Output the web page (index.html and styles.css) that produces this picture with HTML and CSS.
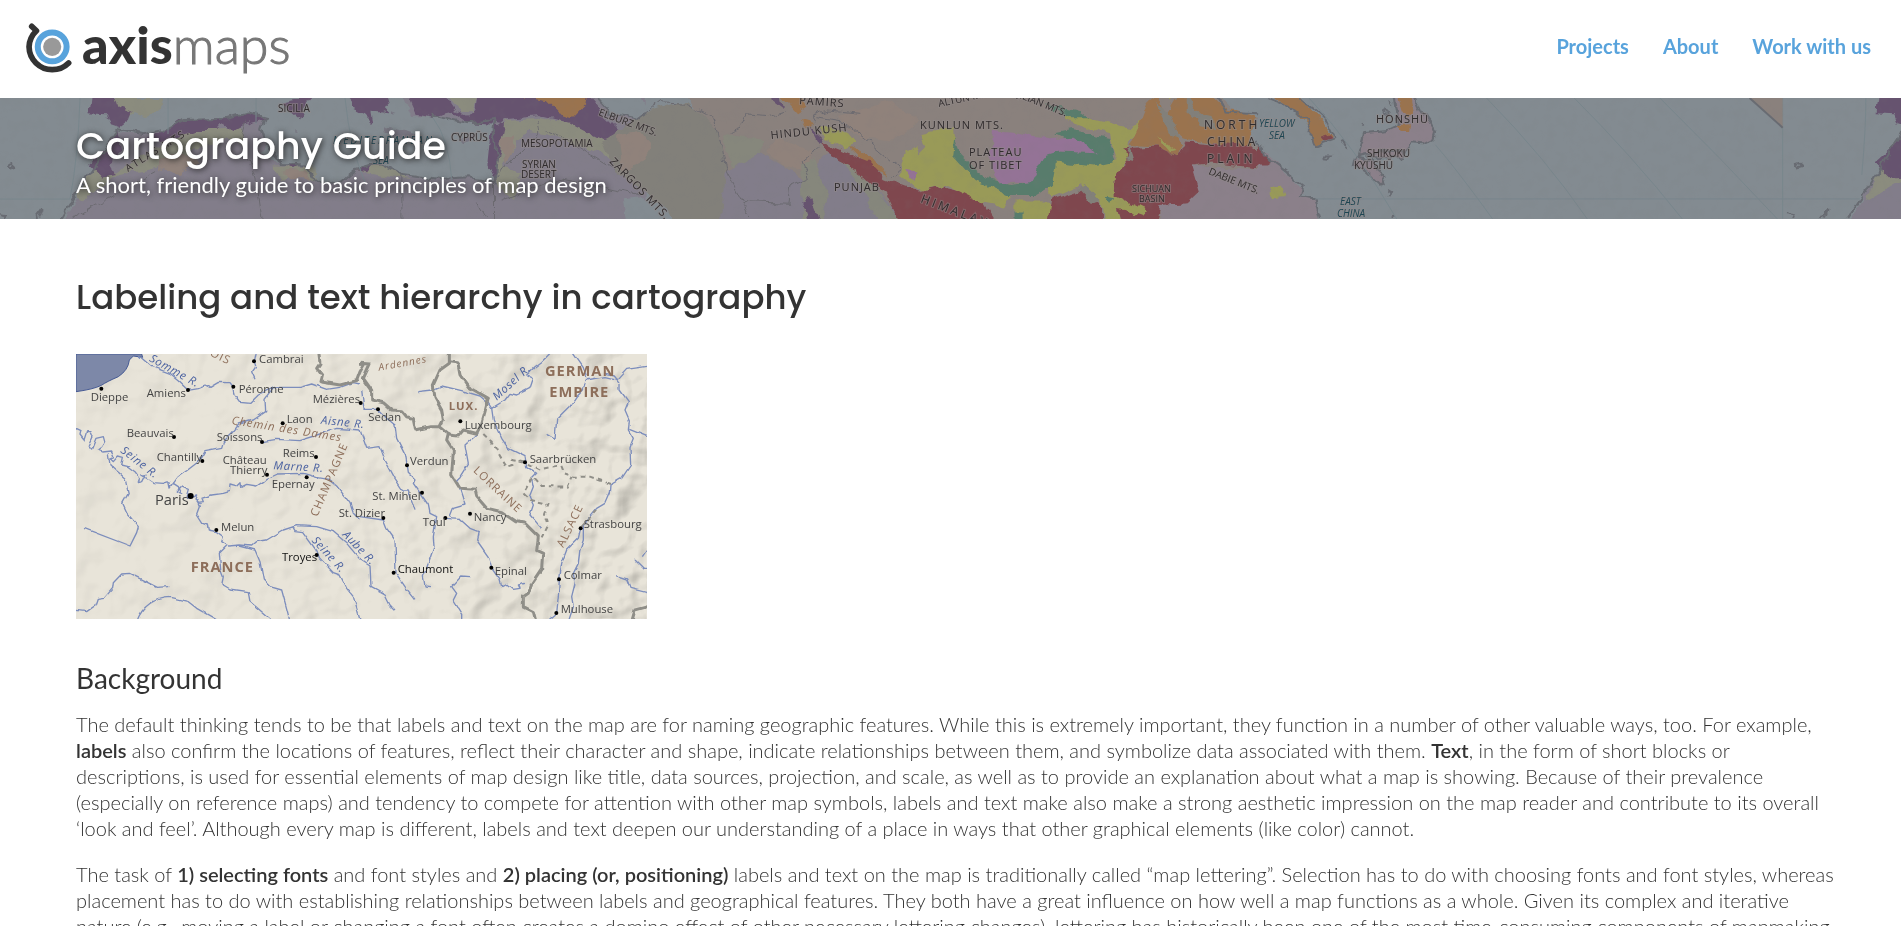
FILE: index.html
```html
<!DOCTYPE html>
<html lang="en">
<head>
<meta charset="utf-8">
<meta name="viewport" content="width=device-width, initial-scale=1">
<title>Labeling and text hierarchy in cartography</title>
<link rel="stylesheet" href="styles.css">
</head>
<body>
<header class="site-header">
  <a class="brand" href="#" aria-label="axismaps">
    <svg class="brand-mark" viewBox="75 65 140 155" aria-hidden="true">
      <path d="M95 78L109 91Q88 111 87 139A69 69 0 0 0 156 207Q185 207 205 187" fill="none" stroke="#333" stroke-width="17" stroke-linecap="round" stroke-linejoin="round"/>
      <circle cx="156" cy="139" r="43" fill="#fff" stroke="#58a3dc" stroke-width="18"/>
      <circle cx="156" cy="139" r="27" fill="#999"/>
    </svg>
    <span class="brand-name"><b>axis</b><span class="brand-thin">maps</span></span>
  </a>
  <nav class="site-nav">
    <a href="#">Projects</a>
    <a href="#">About</a>
    <a href="#">Work with us</a>
  </nav>
</header>

<section class="banner">
  <svg class="banner-map" viewBox="0 0 1901 121" preserveAspectRatio="xMinYMid slice" aria-hidden="true">
    <defs>
      <filter id="relief" x="0" y="0" width="100%" height="100%">
        <feTurbulence type="fractalNoise" baseFrequency=".09" numOctaves="3" seed="5"/>
        <feColorMatrix values="0 0 0 0 .2  0 0 0 0 .2  0 0 0 0 .2  1.6 0 0 0 -.72"/>
      </filter>
      <filter id="rough" filterUnits="userSpaceOnUse" x="-10" y="-10" width="1921" height="141" color-interpolation-filters="sRGB">
        <feTurbulence type="fractalNoise" baseFrequency=".08" numOctaves="3" seed="2" result="n"/>
        <feDisplacementMap in="SourceGraphic" in2="n" scale="9" xChannelSelector="R" yChannelSelector="G"/>
      </filter>
      <g id="iberia">
        <path class="ochre" d="M270 9H398L391 50L360 72L330 55L310 70L270 45Z"/>
        <path class="purple" d="M222 0H280L290 35L325 50L318 72L292 96L272 88L262 58L217 55Z"/>
        <path class="coast" d="M20 208l10-4 8 9-12 4zM0 355l14 3-4 14M82 372l20-32-8 28"/>
      </g>
    </defs>
    <rect class="sea" width="1901" height="121"/>
    <g filter="url(#rough)">
    <rect class="sea" x="-10" y="-10" width="1921" height="141"/>
    <g transform="translate(0 -3) scale(.408 .333)">
      <path class="lilac" d="M150 390L185 320L195 290L230 220L262 150L290 105L330 118L400 105L450 75L540 72L610 52L650 65L640 100L655 150L640 175L690 210L750 212L775 260L830 265L870 225L930 205L990 240L1080 255L1150 250L1210 262L1222 190L1205 100L1210 75L1150 85L1060 62L1010 60L990 0H1580V390Z"/>
      <path class="ochre" d="M232 220L285 230L330 190L400 150L430 108L540 100L590 95L600 160L560 130L500 150L420 210L360 225L290 240L200 320L190 300ZM670 215L770 215L775 262L720 225L690 260ZM868 225L930 205L1010 255L900 235ZM1215 150L1240 75L1320 68L1450 90L1530 120L1580 170V230L1470 175L1340 118L1290 110L1230 215L1280 230L1260 315L1220 280Z"/>
      <path class="peach" d="M390 190L430 170L490 200L440 240L390 225ZM690 230L750 225L760 250H710ZM1225 130L1260 125L1260 155L1240 210Z"/>
      <path class="purple" d="M262 155L290 103L300 170L268 205L285 240L250 248L215 205ZM350 140L415 95L440 75L540 70L610 50L650 70L600 88L575 105L545 85L530 105L480 105L400 145ZM690 20L770 0L750 35L735 75L715 55ZM700 210L728 208L720 222ZM870 225L915 207L900 232ZM855 0H960L940 35L955 55L910 50L915 85L890 55L865 40ZM1000 0L1020 55L1060 65L1110 50L1150 85L1220 90L1240 70L1320 60L1400 85L1480 135L1530 120L1480 60L1440 0H1170L1165 45L1150 65L1115 45L1090 0ZM1205 80L1238 85L1230 130L1215 250L1195 200Z"/>
      <path class="ochre" d="M1095 0H1170L1160 52L1130 50Z"/>
      <path class="orange" d="M1250 0H1440L1435 30L1405 68L1370 55L1340 18Z"/>
      <path class="island" d="M940 95L1030 120L1010 132L940 112ZM1125 130L1165 120L1155 140L1135 145ZM728 96l8 9-6 3ZM960 55l12 5-6 8ZM935 45l12 3-6 10Z"/>
      <path class="coast" d="M150 372L190 290L230 220L262 150L290 100L350 118L400 105L450 75L540 72L610 52L650 65L640 100L655 150L690 210L750 212L775 260L830 265L870 225L930 205L990 240L1080 255L1150 250L1215 262L1220 190L1205 100L1210 75L1150 85L1060 62"/>
      <path class="border" d="M640 372L625 250L590 120L600 80M985 372V240M1212 372V260L1230 225L1325 110L1320 75M180 372L210 350L385 230M1170 320L1195 372M1340 110L1400 140L1450 180L1550 255M1230 320L1370 250L1568 300"/>
      <use href="#iberia"/>
    </g>
    <g transform="translate(640 -3) scale(.408 .333)">
      <path class="tan" d="M110 0H1580V390H200V150Z"/>
      <path class="stone" d="M0 60L110 15L195 110L210 230L215 360L200 390H80L60 340L0 280L-60 230L-90 140Z"/>
      <path class="khaki" d="M205 120L300 130L295 210L220 220Z"/>
      <path class="peach" d="M-55 120L0 110L30 160L10 200L-45 230ZM340 130L430 170L400 230L350 210L310 170ZM480 60L620 20L680 80L620 140L540 130Z"/>
      <path class="lilac" d="M210 230L300 175L400 250L460 170L560 250L650 390H200Z"/>
      <path class="khaki" d="M395 210L430 190L460 310L440 390H400ZM470 170L550 230L600 320L650 390H590L530 250Z"/>
      <path class="sea" d="M-110 0H0L20 55L0 72L-70 55ZM-40 310L-5 305L40 340L70 390H-30Z"/>
      <path class="coast" d="M-110 0L-70 55L0 72L20 55"/>
      <path class="border" d="M0 70L50 20L110 25L185 75L195 115L210 220L250 320L365 325L370 270L415 245L400 200L440 160M215 115L245 100L260 60L320 65L360 50M430 65L500 80L550 130L640 225L620 245M250 320L270 372M430 80L420 60L460 45L540 55"/>
      <path class="purple" d="M305 0H345L350 42ZM415 90L450 130L440 150ZM395 320L420 310L445 390H415Z"/>
      <path class="orange" d="M345 0H390L410 35L385 55ZM392 72L430 85L405 100ZM510 150L570 190L610 245L560 210Z"/>
      <path class="yellow" d="M440 100L500 100L530 145L500 160L455 130Z"/>
      <path class="red" d="M445 140L480 160L560 200L600 250L690 290L740 275L830 300L875 390H640L600 290L530 230L455 170Z"/>
      <path class="yellow" d="M690 120L770 100L775 190L830 250L910 300L895 335L830 320L750 270L690 290L640 240L650 170L690 150ZM1040 55L1110 70L1200 100L1230 75L1235 100L1200 130L1190 215L1165 235L1160 310L1180 390H1140L1130 320L1080 270L1010 308L1000 280L1015 200L1170 200L1150 120L1040 75ZM920 320L1000 320L1020 350L990 390H920Z"/>
      <path class="green" d="M770 130L785 180L805 205L850 250L910 270L960 260L985 185L1020 168L1120 175L1020 115L1060 105L1150 130L1165 200L1110 215L1020 200L1010 270L970 300L900 300L820 255L765 180ZM990 25L1070 45L1100 70L1060 70ZM918 350H940V390H918Z"/>
      <path class="pink" d="M865 105L910 110L1000 130L1060 125L1125 175L1030 170L990 185L960 262L880 265L860 210ZM655 225L680 230L670 255Z"/>
      <path class="tan" d="M1080 0H1260L1300 120L1240 60L1210 90L1110 70ZM700 155L680 180L690 130Z"/>
      <path class="orange" d="M1200 150L1225 85L1245 20L1270 0L1290 80L1330 150L1320 185L1270 155ZM1320 0H1400L1440 45L1510 45L1515 130L1490 160L1330 130L1290 60Z"/>
      <path class="stone" d="M1340 0L1365 50L1400 60L1410 100L1375 90L1340 50ZM1262 20L1300 60L1325 130L1300 120Z"/>
      <path class="red" d="M1185 160L1270 155L1320 185L1340 140L1500 155L1545 190L1530 220L1400 200L1350 210L1390 265L1390 300L1350 340L1280 330L1265 390H1180L1160 310L1165 235L1195 205ZM1010 315L1080 285L1130 330V390H1000Z"/>
      <path class="mauve" d="M1350 208L1400 215L1540 220L1580 240V390H1280L1275 330L1340 325L1370 290ZM1370 290L1395 320L1370 325Z"/>
      <path class="stone" d="M1090 270L1130 320L1110 330L1075 285ZM1200 155L1210 195L1190 190Z"/>
      <path class="yellow" d="M1265 120L1315 165L1300 170ZM1540 285L1568 275V315L1550 310ZM1140 290L1240 350L1235 365L1190 345L1150 340ZM1280 0H1310L1300 22Z"/>
      <path class="green" d="M1140 305L1162 310L1155 330Z"/>
      <path class="sea" d="M1420 0H1580V180L1490 140L1520 70L1450 40Z"/>
      <path class="coast" d="M1415 0L1435 50L1515 55M1510 140L1545 190L1568 215"/>
    </g>
    <g transform="translate(1260 -3) scale(.408 .333)">
      <path class="sea" d="M0 0H1600V390H0Z"/>
      <path class="mauve" d="M-5 160L20 170L60 235L80 245L105 290L98 305L130 310L145 390H-5Z"/>
      <path class="red" d="M-5 150L30 195L20 215H-5Z"/>
      <path class="yellow" d="M20 280L50 275L62 310L30 312Z"/>
      <path class="coast" d="M0 155L35 205L80 245L105 270L98 302L130 310L145 372"/>
      <path class="orange" d="M20 0H95L130 50L155 80L180 125L135 150L120 100L80 40Z"/>
      <path class="coast" d="M20 9L80 40L115 80L135 152L185 130L165 80L130 40L95 9"/>
      <path class="mauve outline" d="M330 0H378L395 50L430 110L425 130L400 145L370 142L350 170L310 165L285 178L240 185L255 115L310 108L340 90ZM235 190L275 195L285 225L310 250L300 270L260 225L230 215ZM260 180L345 165L350 190L280 190Z"/>
      <path class="orange" d="M340 9H372L380 55L365 75L350 50ZM335 90L368 88L365 108L345 108Z"/>
      <path class="red" d="M145 125L172 115L178 130L155 138Z"/>
      <path class="coast" d="M200 140L212 165M155 185l18 0-5 10-12-2zM250 85l6 9M302 50l8-6 4 10-8 4zM316 18l10 14M310 285l12 8-10 10M320 368l10-3"/>
    </g>
    <g transform="translate(1787 -3) scale(.408 .333)">
      <use href="#iberia"/>
      <path class="lilac" d="M150 390L185 320L195 290L230 220L262 150L290 105V390Z"/>
      <path class="ochre" d="M230 215L290 250L195 320Z"/>
      <path class="purple" d="M262 155L290 103L300 245L250 248L215 205Z"/>
      <path class="coast" d="M150 372L195 290L230 220L262 150L290 100"/>
    </g>
    </g>
    <g transform="translate(1260 -3) scale(.408 .333)">
      <path class="grid" d="M120 9Q230 150 335 372M430 150Q480 220 570 372M555 9Q700 190 802 372M770 9Q910 180 1035 372M980 9Q1130 190 1268 372M135 312H1470M1281 9V372M1485 9Q1485 100 1475 240"/>
      <path class="tan" d="M1200 9H1281V98Z"/><path class="coast" d="M1200 9L1281 98"/>
    </g>
    <path class="grid" d="M80 0Q78 60 70 101H0M168 0V36M256 0V26M345 0Q350 50 365 84M433 20Q449 40 452 84"/>
    <rect width="1901" height="121" filter="url(#relief)" opacity=".15"/>
    <g class="place">
      <text x="278" y="14">SICILIA</text>
      <text class="tracked" x="128" y="74" transform="rotate(-32 128 74)">ATLAS MTS.</text>
      <text x="451" y="43">CYPRŪS</text>
      <text x="521" y="49">MESOPOTAMIA</text>
      <text x="522" y="70">SYRIAN</text><text x="521" y="80">DESERT</text>
      <text x="598" y="17" transform="rotate(20 598 17)">ELBURZ MTS.</text>
      <text class="large" x="609" y="64" transform="rotate(46 609 64)">ZARGOS MTS.</text>
      <text class="large" x="799" y="6" transform="rotate(4 799 6)">PAMIRS</text>
      <text class="large" x="771" y="41" transform="rotate(-6 771 41)">HINDU KUSH</text>
      <text class="large" x="834" y="93">PUNJAB</text>
      <text class="large" x="920" y="31">KUNLUN MTS.</text>
      <text x="939" y="9" transform="rotate(-12 939 9)">ALTUN MTS.</text>
      <text x="1012" y="-3" transform="rotate(22 1012 -3)">QILIAN MTS.</text>
      <text class="large" x="969" y="58">PLATEAU</text><text class="large" x="969" y="71">OF TIBET</text>
      <text class="wide" x="920" y="104" transform="rotate(21 920 104)">HIMALAYAS</text>
      <text class="wide" x="1204" y="31">NORTH</text><text class="wide" x="1207" y="48">CHINA</text><text class="wide" x="1207" y="65">PLAIN</text>
      <text x="1208" y="76" transform="rotate(22 1208 76)">DABIE MTS.</text>
      <text class="tight" x="1132" y="94">SICHUAN</text><text class="tight" x="1139" y="104">BASIN</text>
      <text class="large" x="1376" y="25">HONSHŪ</text><text x="1367" y="59">SHIKOKU</text><text x="1354" y="71">KYŪSHŪ</text>
    </g>
    <g class="water">
      <text class="tracked" x="333" y="46">MEDITERRANEAN</text><text x="373" y="66">SEA</text>
      <text x="1259" y="29">YELLOW</text><text x="1269" y="41">SEA</text>
      <text x="1340" y="107">EAST</text><text x="1337" y="119">CHINA</text>
    </g>
  </svg>
  <div class="banner-text">
    <p class="banner-title">Cartography Guide</p>
    <p class="banner-sub">A short, friendly guide to basic principles of map design</p>
  </div>
</section>

<main class="content">
  <h1>Labeling and text hierarchy in cartography</h1>
  <svg class="figure" viewBox="18 12 1713 795" role="img" aria-label="Labeled map of northeastern France">
    <defs>
      <filter id="terrain" x="0" y="0" width="100%" height="100%" color-interpolation-filters="sRGB">
        <feTurbulence type="fractalNoise" baseFrequency=".008" numOctaves="3" seed="8"/>
        <feDiffuseLighting surfaceScale="24" diffuseConstant="1.2" lighting-color="#fff"><feDistantLight azimuth="225" elevation="55"/></feDiffuseLighting>
      </filter>
      <filter id="meander" filterUnits="userSpaceOnUse" x="0" y="0" width="1750" height="820" color-interpolation-filters="sRGB">
        <feTurbulence type="fractalNoise" baseFrequency=".03" numOctaves="2" seed="3" result="n"/>
        <feDisplacementMap in="SourceGraphic" in2="n" scale="12" xChannelSelector="R" yChannelSelector="G"/>
      </filter>
      <linearGradient id="fade"><stop offset=".1" stop-color="#333"/><stop offset=".6" stop-color="#666"/><stop offset="1" stop-color="#fff"/></linearGradient>
      <mask id="east"><rect x="18" y="12" width="1713" height="795" fill="url(#fade)"/></mask>
    </defs>
    <rect class="land" x="18" y="12" width="1713" height="795"/>
    <g class="shade" mask="url(#east)"><rect x="18" y="12" width="1713" height="795" filter="url(#terrain)"/></g>
    <path d="M18 12H215L218 22L190 18L178 30Q175 60 145 80Q110 95 94 106Q70 118 18 125Z" fill="#7d88a8" stroke="#465a94" stroke-width="3"/>
    <g filter="url(#meander)">
    <g class="river">
      <path d="M205 16L245 50L300 70L325 90L354 118L385 113L405 105L420 112L445 97L480 98L488 108L492 135L508 157L540 160L565 135L610 112L690 112L725 102L770 118L810 112L850 98L870 102"/>
      <path d="M610 112L585 145L587 185L550 210L508 222L485 250L460 275L455 292L405 302L385 335L350 362L325 380L310 400"/>
      <path d="M560 0L553 35L557 48L545 65L555 88"/>
      <path d="M8 230L33 242L30 255L42 270L50 245L60 245L66 260L55 285L65 297L78 265L100 260L104 275L95 290L82 300L98 306L125 303L132 320L120 325L130 335L145 318L160 322L155 345L175 350L195 365L210 385L205 398L218 395L228 375L215 375L250 398L280 400L296 395L300 414L310 400L325 410L335 430L320 425L335 408L358 418L350 445L380 438L375 450L385 460L400 458L395 445L425 435L460 430L478 425L480 405L498 410L510 398L512 412L530 403L560 408L580 395L592 385L620 372L700 370L740 382L775 388L800 408L825 440L840 460L850 490L870 510"/>
      <path d="M380 450L388 470L380 492L398 520L412 525L415 540L440 545L460 560L455 575L475 588L510 585L545 588L560 575L590 570L640 540L680 527L740 530L790 545L830 580L870 628"/>
      <path d="M115 310L120 345L165 385L175 430L158 460L172 490L205 530L200 548L180 588L42 535"/>
      <path d="M8 780L50 785L78 765L85 745L105 742L128 715L130 698L155 672L178 670L262 712L298 710"/>
      <path d="M200 815Q225 745 300 742L355 755L380 775L450 815"/>
      <path d="M470 588L448 610L452 660L460 680L455 705L480 720L535 728L540 755L610 815M510 588L555 600L570 635L580 690L600 710L635 720L650 775L660 815"/>
      <path d="M668 530L675 542L698 545L715 568L738 600L745 620L790 668L810 675L830 715L850 740L870 810"/>
      <path d="M576 275L620 268L690 272L735 258L800 235L870 240"/>
    </g>
    <g transform="translate(870 0)">
      <g class="river">
        <path d="M0 240L20 295L60 290L75 330L105 385L128 420L145 420L165 482"/>
        <path d="M5 120L12 178L54 178L80 205L105 225L110 265L138 320L145 370L165 390L160 400L205 465L210 490L230 500L220 560L222 590L205 640L190 680L195 708L210 710"/>
        <path d="M0 500L70 510L80 535L105 570L108 670L135 710L165 748"/>
        <path d="M0 625L30 645L33 712L75 735L90 765L105 780"/>
        <path d="M257 505L300 508L330 535L355 545L350 570L385 620L395 655L420 690L425 710L440 702L460 718L480 715L475 705L495 700"/>
        <path d="M172 125L215 120L245 108L305 122L360 138L385 160L395 175L435 150L450 130L470 135L510 115L520 85L500 75L525 50L545 35L560 20L580 0"/>
        <path d="M395 175L400 210L425 265L445 295L495 320L500 350L530 370L515 385L520 410L508 440L520 465L510 495L545 535"/>
        <path d="M355 250L315 285L325 340L300 380L290 390L315 465L280 475L270 500"/>
        <path d="M635 0L670 50L680 85L670 120L650 140L630 170L590 210L585 265L560 250M680 90L735 80L770 88L800 55L870 45"/>
        <path d="M735 70L760 75L780 100L780 120L805 155L795 180L808 210L805 240L820 265L810 290L812 345L785 385L750 405L748 430L735 460L710 475L685 505L670 530L670 570L660 600L655 640L640 670L645 700L635 740L640 770L625 815"/>
        <path d="M662 535L655 565L620 600L605 640L598 690L595 740L590 790L560 815M808 235L870 260"/>
        <path d="M770 680L800 690L810 715L870 730M825 630L850 655L870 655M870 590L850 620"/>
        <path d="M330 680L305 678L275 710L290 730L280 750L305 790L305 815"/>
      </g>
      <path class="frontier" d="M-125 0L-120 40L-130 55L-115 75L-120 95L-60 105L-10 92L0 65L15 40M0 40L30 42L10 85L35 120L35 150L70 158L95 180L125 182L140 200L160 205L167 240L210 230L240 230L265 250L260 270L280 300L275 375L300 415L345 418L350 440L380 475L425 485L470 515L495 520L535 560L530 602L548 610L545 655L515 700L505 730L490 740L490 770L520 785L528 815"/>
      <path class="frontier" d="M268 0L268 40L240 60L220 105L225 145L245 180L250 210L240 230M268 35L293 38L300 75L325 110L385 145L375 185L365 220L350 250L310 240L295 258L265 255M815 815L825 780L870 768"/>
      <path class="dashed" d="M370 252L395 275L430 335L440 350L460 345L455 330L495 338L540 358L600 345L610 370L640 380L690 380L750 402M525 385L545 408L620 410L635 380M515 385L490 430L510 450L565 462L555 490L565 525L545 565"/>
      <path d="M665 530L710 480" class="dashed"/>
    </g>
    </g>
    <g class="dots">
      <circle cx="94" cy="116" r="6"/><circle cx="354" cy="120" r="6"/><circle cx="490" cy="110" r="6"/><circle cx="552" cy="34" r="6"/><circle cx="638" cy="220" r="6"/><circle cx="312" cy="261" r="6"/><circle cx="397" cy="333" r="6"/><circle cx="576" cy="276" r="6"/><circle cx="738" cy="321" r="6"/><circle cx="591" cy="374" r="6"/><circle cx="710" cy="382" r="6"/><circle cx="362" cy="438" r="9"/><circle cx="439" cy="540" r="6"/><circle cx="740" cy="615" r="6"/><circle cx="872" cy="159" r="6"/><circle cx="924" cy="178" r="6"/><circle cx="1171" cy="214" r="6"/><circle cx="1011" cy="346" r="6"/><circle cx="1056" cy="428" r="6"/><circle cx="940" cy="504" r="6"/><circle cx="1126" cy="504" r="6"/><circle cx="1200" cy="491" r="6"/><circle cx="1365" cy="337" r="6"/><circle cx="1532" cy="535" r="6"/><circle cx="971" cy="668" r="6"/><circle cx="1264" cy="653" r="6"/><circle cx="1467" cy="688" r="6"/><circle cx="1459" cy="789" r="6"/>
    </g>
    <g class="town">
      <text x="62" y="153">Dieppe</text><text x="230" y="141">Amiens</text><text x="506" y="130">Péronne</text><text x="567" y="39">Cambrai</text><text x="728" y="159">Mézières</text>
      <text x="650" y="219">Laon</text><text x="170" y="261">Beauvais</text><text x="440" y="272">Soissons</text><text x="260" y="333">Chantilly</text><text x="458" y="342">Château</text><text x="480" y="371">Thierry</text><text x="638" y="320">Reims</text><text x="605" y="414">Epernay</text>
      <text class="capital" x="255" y="466">Paris</text><text x="453" y="543">Melun</text><text class="strong" x="636" y="633">Troyes</text><text x="806" y="501">St. Dizier</text>
      <text x="895" y="213">Sedan</text><text x="1184" y="237">Luxembourg</text><text x="1020" y="345">Verdun</text><text x="907" y="450">St. Mihiel</text><text x="1058" y="528">Toul</text><text x="1211" y="513">Nancy</text><text x="1379" y="339">Saarbrücken</text><text x="1541" y="534">Strasbourg</text><text class="strong" x="983" y="669">Chaumont</text><text x="1274" y="675">Epinal</text><text x="1481" y="687">Colmar</text><text x="1472" y="789">Mulhouse</text>
    </g>
    <g class="stream">
      <text x="236" y="32" transform="rotate(29 236 32)">Somme R.</text><text x="150" y="305" transform="rotate(38 150 305)">Seine R.</text><text x="752" y="221" transform="rotate(6 752 221)">Aisne R.</text><text x="610" y="358" transform="rotate(3 610 358)">Marne R.</text><text x="724" y="572" transform="rotate(48 724 572)">Seine R.</text><text x="816" y="556" transform="rotate(46 816 556)">Aube R.</text><text x="1280" y="152" transform="rotate(-42 1280 152)">Mosel R.</text>
    </g>
    <g class="region">
      <text x="418" y="16" transform="rotate(26 418 16)">OIS</text>
      <text class="slant" x="484" y="222" transform="rotate(9 484 222)">Chemin des Dames</text><text class="slant small" x="927" y="62" transform="rotate(-10 927 62)">Ardennes</text>
      <text x="742" y="502" transform="rotate(-67 742 502)">CHAMPAGNE</text><text x="1208" y="364" transform="rotate(43 1208 364)">LORRAINE</text><text x="1480" y="594" transform="rotate(-64 1480 594)">ALSACE</text>
      <g class="country"><text x="362" y="665">FRANCE</text><text x="1425" y="77">GERMAN</text><text x="1438" y="141">EMPIRE</text><text class="mid" x="1136" y="180">LUX.</text></g>
    </g>
  </svg>

  <h2>Background</h2>
  <p>The default thinking tends to be that labels and text on the map are for naming geographic features. While this is extremely important, they function in a number of other valuable ways, too. For example, <strong>labels</strong> also confirm the locations of features, reflect their character and shape, indicate relationships between them, and symbolize data associated with them. <strong>Text</strong>, in the form of short blocks or descriptions, is used for essential elements of map design like title, data sources, projection, and scale, as well as to provide an explanation about what a map is showing. Because of their prevalence (especially on reference maps) and tendency to compete for attention with other map symbols, labels and text make also make a strong aesthetic impression on the map reader and contribute to its overall ‘look and feel’. Although every map is different, labels and text deepen our understanding of a place in ways that other graphical elements (like color) cannot.</p>
  <p>The task of <strong>1) selecting fonts</strong> and font styles and <strong>2) placing (or, positioning)</strong> labels and text on the map is traditionally called “map lettering”. Selection has to do with choosing fonts and font styles, whereas placement has to do with establishing relationships between labels and geographical features. They both have a great influence on how well a map functions as a whole. Given its complex and iterative nature (e.g., moving a label or changing a font often creates a domino effect of other necessary lettering changes), lettering has historically been one of the most time-consuming components of mapmaking.</p>
</main>
</body>
</html>
```

FILE: styles.css
```css
* { box-sizing: border-box; }
body {
  margin: 0;
  background: #fff;
  color: #333;
  font-family: Lato, "Liberation Sans", sans-serif;
  font-size: 20px;
  font-weight: 300;
  line-height: 26px;
}
.site-header {
  display: flex;
  align-items: center;
  justify-content: space-between;
  height: 98px;
  padding: 0 30px 6px 25px;
}
.brand {
  display: flex;
  align-items: center;
  gap: 10px;
  padding-top: 3px;
  color: #777;
  text-decoration: none;
}
.brand-mark { width: 47px; height: 52px; }
.brand-name { font-size: 52px; line-height: 60px; padding-bottom: 8px; }
.brand-name b { color: #333; font-weight: 900; }
.brand-thin { -webkit-text-stroke: 1px #777; }
.site-nav { display: flex; gap: 34px; }
.site-nav a { color: #58a3dc; font-weight: 700; text-decoration: none; }

.banner {
  position: relative;
  overflow: hidden;
  padding: 23px 4% 20px;
  color: #fff;
}
.banner-map { position: absolute; inset: 0; width: 100%; height: 100%; }
.banner-text { position: relative; text-shadow: 1px 1px 6px #222; }
.banner-title {
  margin: 0;
  font: 500 38px/50px Poppins, Inter, sans-serif;
}
.banner-sub { margin: 0; font-size: 22px; line-height: 28px; font-weight: 400; }
.sea { fill: #838b91; }
.lilac { fill: #827d8a; }
.mauve { fill: #8b808a; }
.ochre { fill: #8b8c7e; }
.khaki { fill: #86877c; }
.stone { fill: #82807a; }
.tan { fill: #8a817d; }
.peach { fill: #90827b; }
.purple { fill: #66536f; }
.orange { fill: #9a734e; }
.yellow { fill: #999a58; }
.green { fill: #587c6c; }
.pink { fill: #947396; }
.red { fill: #7f474e; }
.island { fill: #777580; }
.coast, .outline { stroke: #686b72; stroke-width: 2; vector-effect: non-scaling-stroke; }
.coast, .grid, .border { fill: none; }
.grid { stroke: #78868c; stroke-width: 1; vector-effect: non-scaling-stroke; }
.border { stroke: #6b6a70; stroke-width: 1; vector-effect: non-scaling-stroke; }
.place, .water {
  font: 400 10px "Open Sans", "Noto Sans", sans-serif;
  fill: #302c2d;
  stroke: #918a8a;
  stroke-width: 2px;
  stroke-opacity: .5;
  paint-order: stroke;
}
.water { fill: #1d4552; font-style: italic; }
.place .large { font-size: 11px; letter-spacing: 1px; }
.place .tight { font-size: 9px; }
.tracked { letter-spacing: 2px; }
.place .wide { font-size: 12px; letter-spacing: 3px; }

.content { padding: 54px 64px 40px 4%; }
h1 {
  margin: 0;
  font: 500 34px/48px Poppins, Inter, sans-serif;
}
.figure { display: block; width: 571px; max-width: 100%; margin: 33px 0 39px; }
h2 { margin: 0 0 13px; font-size: 28px; line-height: 40px; font-weight: 400; }
.content p { margin: 0 0 20px; }
.content strong { font-weight: 600; }

.land { fill: #e8e4d9; }
.shade { mix-blend-mode: multiply; opacity: .4; }
.river { fill: none; stroke: #7c8dbc; stroke-width: 4; stroke-linejoin: round; }
.frontier { fill: none; stroke: #8f8e88; stroke-width: 9; stroke-linejoin: round; }
.dashed { fill: none; stroke: #8f8e88; stroke-width: 6; stroke-dasharray: 14 12; }
.town, .stream, .region { font-family: "Open Sans", "Noto Sans", sans-serif; font-weight: 400; font-size: 34px; }
.town { fill: #444; }
.town .capital { font-size: 44px; }
.town .strong { fill: #111; }
.stream { fill: #4a61a0; font-style: italic; letter-spacing: 2px; }
.region { fill: #8d6e5a; letter-spacing: 3px; }
.region .slant { font-style: italic; }
.region .small { font-size: 30px; }
.country { font-weight: 700; font-size: 44px; }
.country .mid { font-size: 34px; }
```
